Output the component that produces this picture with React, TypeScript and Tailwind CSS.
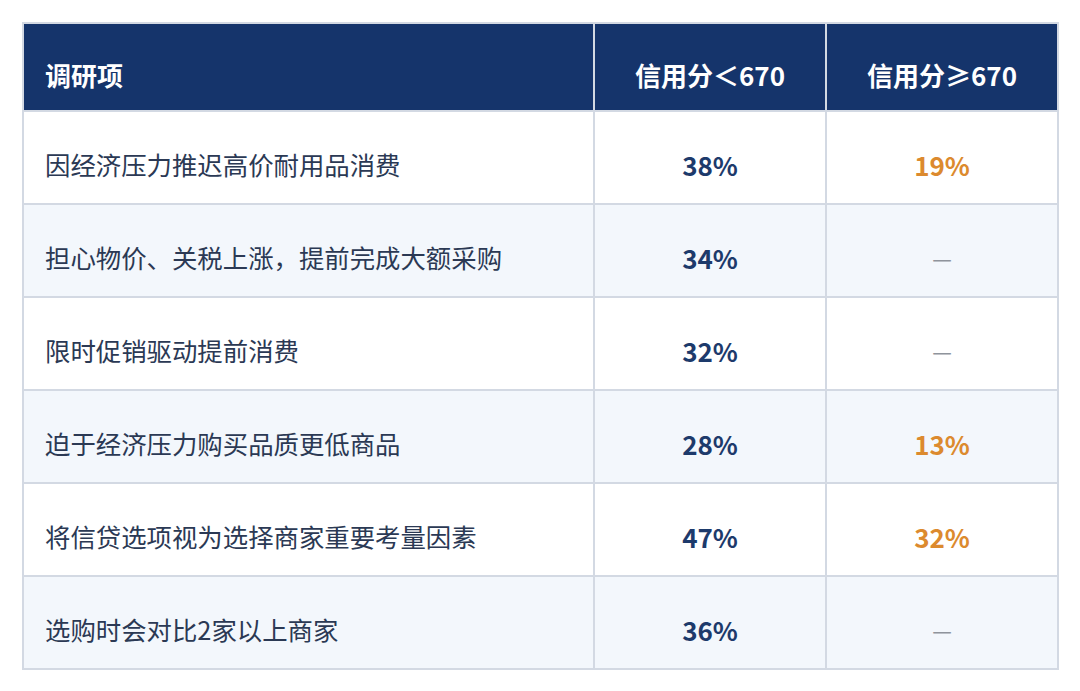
const rows = [
  { item: "因经济压力推迟高价耐用品消费", low: "38%", high: "19%" },
  { item: "担心物价、关税上涨，提前完成大额采购", low: "34%", high: null },
  { item: "限时促销驱动提前消费", low: "32%", high: null },
  { item: "迫于经济压力购买品质更低商品", low: "28%", high: "13%" },
  { item: "将信贷选项视为选择商家重要考量因素", low: "47%", high: "32%" },
  { item: "选购时会对比2家以上商家", low: "36%", high: null },
];

const App = () => {
  return (
    <div className="w-[1080px] h-[691px] bg-white pt-[22px] pl-[22px] font-['Noto_Sans_CJK_SC','Noto_Sans',sans-serif]">
      <table className="w-[1035px] border-collapse border-2 border-[#d3d9e3] table-fixed">
        <colgroup>
          <col className="w-[571px]" />
          <col className="w-[232px]" />
          <col className="w-[232px]" />
        </colgroup>
        <thead>
          <tr className="h-[88px] bg-[#15346b] text-white text-[26px] font-bold">
            <th className="text-left pl-[21px] pt-[14px] border-2 border-[#d3d9e3]">调研项</th>
            <th className="text-center pt-[14px] border-2 border-[#d3d9e3]">信用分＜670</th>
            <th className="text-center pt-[14px] border-2 border-[#d3d9e3]">信用分≥670</th>
          </tr>
        </thead>
        <tbody>
          {rows.map((r, i) => (
            <tr key={r.item} className={i % 2 === 1 ? "h-[93px] bg-[#f3f7fc]" : "h-[93px] bg-white"}>
              <td className="pl-[21px] pt-[14px] text-[25.4px] text-[#2b3954] border-2 border-[#d3d9e3]">{r.item}</td>
              <td className="text-center pt-[14px] text-[26px] font-bold text-[#1d3a6b] border-2 border-[#d3d9e3]">{r.low}</td>
              <td className="text-center pt-[14px] border-2 border-[#d3d9e3]">
                {r.high ? (
                  <span className="text-[26px] font-bold text-[#dc8a2e]">{r.high}</span>
                ) : (
                  <span className="text-[22px] text-[#8f949c]">—</span>
                )}
              </td>
            </tr>
          ))}
        </tbody>
      </table>
    </div>
  );
};

export default App;
